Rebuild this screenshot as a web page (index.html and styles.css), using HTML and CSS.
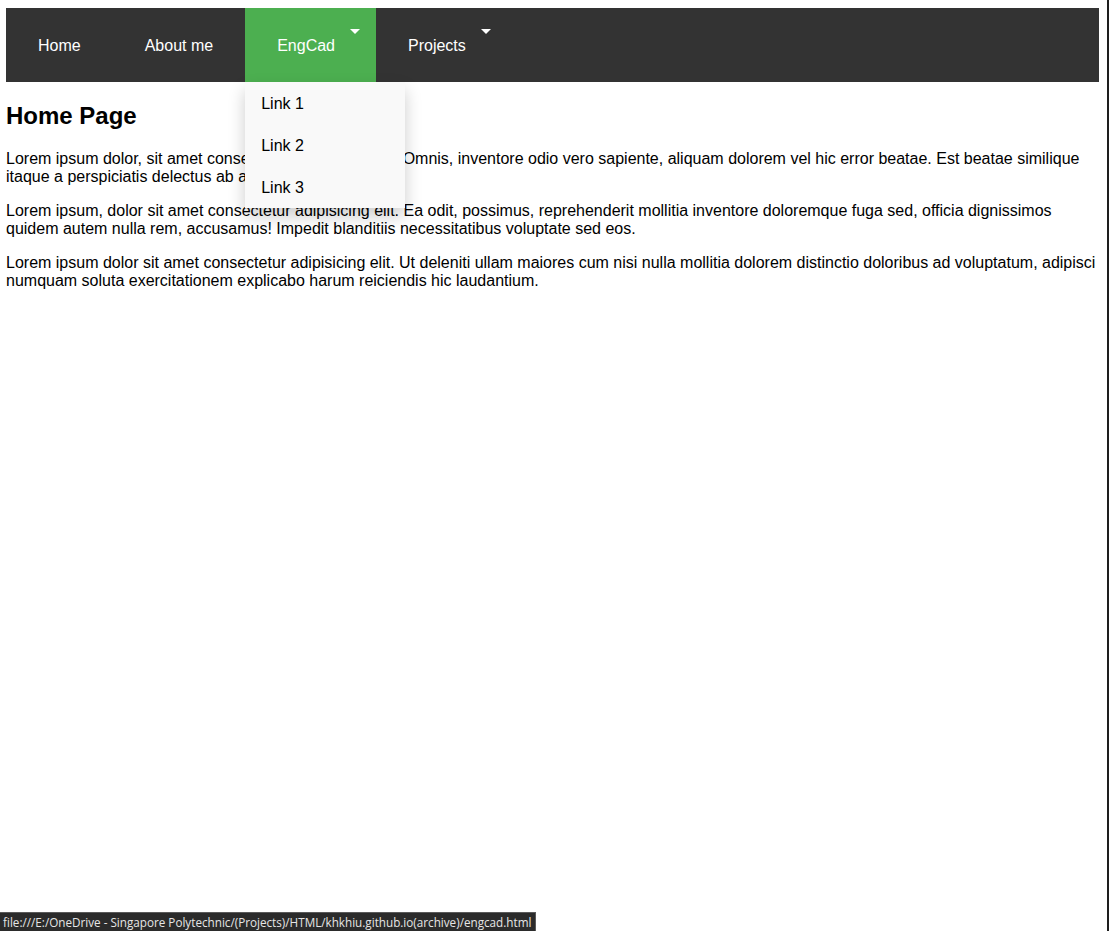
FILE: index.html
```html
<!DOCTYPE html>
<html lang="en">
<head>
<meta charset="utf-8">
<title>EngCad</title>
<link rel="stylesheet" href="styles.css">
</head>
<body>
<nav class="navbar">
  <a class="nav-link" href="#">Home</a>
  <a class="nav-link" href="#">About me</a>
  <div class="dropdown is-open">
    <a class="nav-link has-caret active" href="#">EngCad</a>
    <div class="dropdown-menu">
      <a href="#">Link 1</a>
      <a href="#">Link 2</a>
      <a href="#">Link 3</a>
    </div>
  </div>
  <div class="dropdown">
    <a class="nav-link has-caret" href="#">Projects</a>
  </div>
</nav>
<main class="content">
  <h2 class="title">Home Page</h2>
  <p>Lorem ipsum dolor, sit amet consectetur adipisicing elit. Omnis, inventore odio vero sapiente, aliquam dolorem vel hic error beatae. Est beatae similique itaque a perspiciatis delectus ab animi.</p>
  <p>Lorem ipsum, dolor sit amet consectetur adipisicing elit. Ea odit, possimus, reprehenderit mollitia inventore doloremque fuga sed, officia dignissimos quidem autem nulla rem, accusamus! Impedit blanditiis necessitatibus voluptate sed eos.</p>
  <p>Lorem ipsum dolor sit amet consectetur adipisicing elit. Ut deleniti ullam maiores cum nisi nulla mollitia dolorem distinctio doloribus ad voluptatum, adipisci numquam soluta exercitationem explicabo harum reiciendis hic laudantium.</p>
</main>
<div class="statusbar">file:///E:/OneDrive - Singapore Polytechnic/(Projects)/HTML/khkhiu.github.io(archive)/engcad.html</div>
<div class="frame-edge"></div>
</body>
</html>
```
FILE: styles.css
```css
html {
  background: #fff;
}
body {
  margin: 8px 10px 8px 6px;
  font-family: "Liberation Sans", Arial, sans-serif;
  font-size: 16px;
  color: #000;
}
.navbar {
  display: flex;
  height: 74px;
  background: #333;
}
.nav-link {
  display: flex;
  align-items: center;
  height: 74px;
  box-sizing: border-box;
  padding: 2px 32px 0;
  color: #fff;
  text-decoration: none;
}
.has-caret {
  padding-right: 16px;
  position: relative;
}
.has-caret::after {
  content: "";
  display: block;
  width: 0;
  height: 0;
  margin-left: 15px;
  border-left: 5px solid transparent;
  border-right: 5px solid transparent;
  border-top: 5px solid #fff;
  align-self: flex-start;
  margin-top: 19px;
}
.active {
  background: #4caf50;
}
.dropdown {
  position: relative;
}
.dropdown-menu {
  display: none;
}
.is-open .dropdown-menu {
  display: block;
  position: absolute;
  top: 74px;
  left: 0;
  width: 160px;
  background: #f9f9f9;
  box-shadow: 0 8px 16px rgba(0, 0, 0, 0.2);
  z-index: 2;
}
.dropdown-menu a {
  display: block;
  padding: 13px 16px 11px;
  color: #000;
  text-decoration: none;
  line-height: 18px;
}
.title {
  font-size: 24px;
  margin: 20px 0;
}
.content p {
  margin: 16px 0;
}
.statusbar {
  position: fixed;
  left: 0;
  bottom: 0;
  height: 19px;
  box-sizing: border-box;
  padding: 1px 4px 0 3px;
  background: #2b2b2b;
  border-top: 1px solid #5a5a5a;
  border-right: 1px solid #5a5a5a;
  color: #e6e6e6;
  font-family: "Open Sans", "Noto Sans", sans-serif;
  font-size: 11.7px;
  line-height: 16px;
  white-space: nowrap;
}
.frame-edge {
  position: fixed;
  top: 0;
  right: 0;
  bottom: 0;
  width: 2px;
  background: #1e1e1e;
}
```
